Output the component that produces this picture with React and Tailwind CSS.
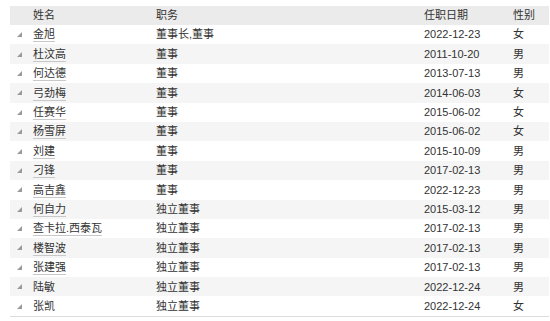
import React from 'react'

const rows = [
  { name: '金旭', title: '董事长,董事', date: '2022-12-23', sex: '女', link: true },
  { name: '杜汶高', title: '董事', date: '2011-10-20', sex: '男', link: true },
  { name: '何达德', title: '董事', date: '2013-07-13', sex: '男', link: true },
  { name: '弓劲梅', title: '董事', date: '2014-06-03', sex: '女', link: true },
  { name: '任赛华', title: '董事', date: '2015-06-02', sex: '女', link: true },
  { name: '杨雪屏', title: '董事', date: '2015-06-02', sex: '女', link: true },
  { name: '刘建', title: '董事', date: '2015-10-09', sex: '男', link: true },
  { name: '刁锋', title: '董事', date: '2017-02-13', sex: '男', link: true },
  { name: '高吉鑫', title: '董事', date: '2022-12-23', sex: '男', link: true },
  { name: '何自力', title: '独立董事', date: '2015-03-12', sex: '男', link: true },
  { name: '查卡拉.西泰瓦', title: '独立董事', date: '2017-02-13', sex: '男', link: true },
  { name: '楼智波', title: '独立董事', date: '2017-02-13', sex: '男', link: true },
  { name: '张建强', title: '独立董事', date: '2017-02-13', sex: '男', link: true },
  { name: '陆敏', title: '独立董事', date: '2022-12-24', sex: '男', link: false },
  { name: '张凯', title: '独立董事', date: '2022-12-24', sex: '女', link: false },
]

const cols = 'grid grid-cols-[23px_123px_268px_89px_1fr] items-center'

function Corner() {
  return (
    <svg width="5" height="5" viewBox="0 0 5 5" className="ml-[7px]">
      <polygon points="5,0 5,5 0,5" fill="#9a9a9a" />
    </svg>
  )
}

export default function App() {
  return (
    <div
      className="bg-white w-[550px] h-[321px] pt-[6px] pl-[10px] pr-[1px] text-[11px] text-[#333]"
      style={{ fontFamily: '"Liberation Sans", "Noto Sans CJK SC", sans-serif' }}
    >
      <div className={`${cols} h-[19px] bg-[#ebebeb]`}>
        <div />
        <div>姓名</div>
        <div>职务</div>
        <div>任职日期</div>
        <div>性别</div>
      </div>
      {rows.map((r, i) => (
        <div
          key={r.name}
          className={`${cols} h-[19.4px] ${i % 2 === 1 ? 'bg-[#f5f5f5]' : 'bg-white'}`}
        >
          <Corner />
          <div>
            <span
              className={`inline-block leading-[13px] ${r.link ? 'border-b border-[#c8c8c8]' : ''}`}
            >
              {r.name}
            </span>
          </div>
          <div>{r.title}</div>
          <div>{r.date}</div>
          <div>{r.sex}</div>
        </div>
      ))}
      <div className="border-t border-[#dcdcdc]" />
    </div>
  )
}
